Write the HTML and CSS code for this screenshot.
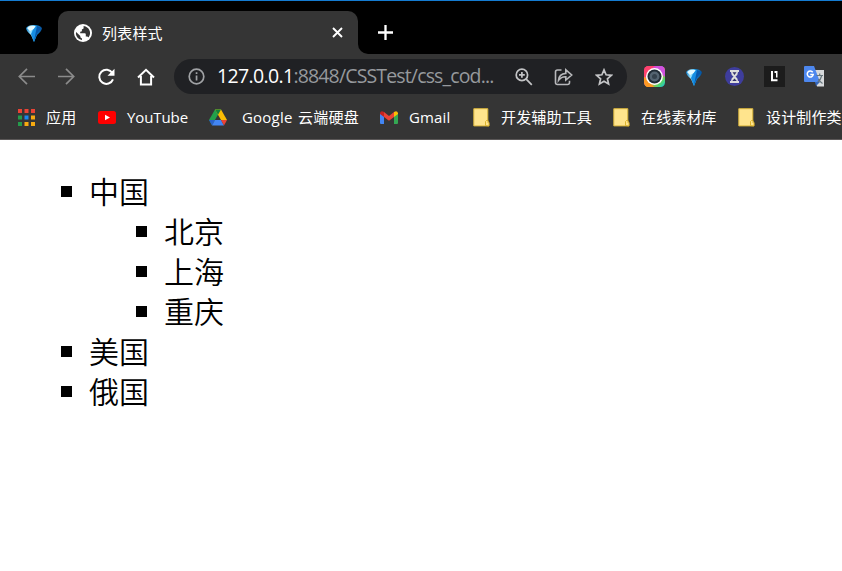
FILE: index.html
```html
<!DOCTYPE html>
<html lang="zh-CN">
<head>
<meta charset="utf-8">
<title>列表样式</title>
<link rel="stylesheet" href="styles.css">
</head>
<body>
<svg class="defs" width="0" height="0" aria-hidden="true">
  <defs>
    <linearGradient id="gem" x1="0" x2="1"><stop offset="0" stop-color="#0879c8"/><stop offset=".3" stop-color="#a9eaff"/><stop offset=".55" stop-color="#159ae9"/><stop offset="1" stop-color="#064a91"/></linearGradient>
    <linearGradient id="rainbow" x1="0" y1="0" x2="1" y2="1"><stop offset="0" stop-color="#ff4264"/><stop offset=".22" stop-color="#fb39b4"/><stop offset=".45" stop-color="#b35bf5"/><stop offset=".55" stop-color="#ff9d25"/><stop offset=".8" stop-color="#52d86a"/><stop offset="1" stop-color="#16bde8"/></linearGradient>
    <symbol id="diamond" viewBox="0 0 18 18"><path d="M1 4Q3 1 9 1t8 3q0 3-5 7l-3 7-3-7Q1 7 1 4Z" fill="url(#gem)"/><path d="M2 4Q5 1 11 2L9 5 5 7Z" fill="#e5faff"/><path d="M8 6l3-4 2 5-4 11-3-8Z" fill="#168ee3"/><path d="M12 2l4 2-4 6-3 7 2-10Z" fill="#0757ab"/></symbol>
    <symbol id="note" viewBox="0 0 17 19"><path d="M.8.7h14v12.5l1 1v3.7H.8Z" fill="#ffe48d" stroke="#d9b53c"/><path d="M12.500 17.500v-4l1-1h1.500v2l1 1v2.500Z" fill="#ffe48d" stroke="#d9ae24" stroke-width=".9"/></symbol>
  </defs>
</svg>
<header class="browser">
  <div class="tabs">
    <div class="pinned"><svg width="18" height="18"><use href="#diamond"/></svg></div>
    <div class="tab">
      <svg width="18" height="18" viewBox="0 0 18 18"><circle cx="9" cy="9" r="9" fill="#fff"/><path d="M9.600 2.100v1.800q0 1.400-1.700 1.400v1.600q0 .8-1.700.8v1.500h4.600q1 0 1 1.200v2.100h1q1.300 0 1.700 1Q16.200 11.300 16.100 9q0-1.600-.8-3Q13.900 3 9.600 2.100ZM2.100 8.100l4.200 3.800v.9q0 1.400 1.700 1.600v1.600Q2.600 15 1.900 10Z" fill="#353535"/></svg>
      <span class="tab-title">列表样式</span>
      <svg width="11" height="11" viewBox="0 0 11 11" fill="none" stroke="#fff" stroke-width="1.900"><path d="M1 1l9 9M10 1l-9 9"/></svg>
    </div>
    <div class="strip"><svg width="15" height="15" viewBox="0 0 15 15" fill="none" stroke="#fff" stroke-width="2.300"><path d="M7.500 0v15M0 7.500h15"/></svg></div>
  </div>
  <nav class="toolbar">
    <svg width="17" height="17" viewBox="0 0 17 17" fill="none" stroke="#8b8b8b" stroke-width="1.700"><path d="M17 8.500H1.500M9 .8L1.300 8.500 9 16.200"/></svg>
    <svg class="forward" width="17" height="17" viewBox="0 0 17 17" fill="none" stroke="#8b8b8b" stroke-width="1.700"><path d="M0 8.500h15.500M8 .8l7.700 7.700L8 16.200"/></svg>
    <svg class="reload" width="19" height="18" viewBox="0 0 19 18"><path d="M15.400 5A7.100 7.100 0 1 0 16 11.300" fill="none" stroke="#fff" stroke-width="2"/><path d="M17.500.8v7h-7Z" fill="#fff"/></svg>
    <svg class="home" width="18" height="18" viewBox="0 0 18 18" fill="none" stroke="#fff" stroke-width="2"><path d="M1 9.400l8-7.600 8 7.600M3.900 8v8.500h10.200V8"/></svg>
    <div class="address">
      <svg width="17" height="17" viewBox="0 0 17 17"><circle cx="8.500" cy="8.500" r="7.300" fill="none" stroke="#a0a2a5" stroke-width="1.700"/><path d="M7.700 7.500h1.700v5H7.700zM7.700 4.300h1.700V6H7.700z" fill="#a0a2a5"/></svg>
      <span class="url"><b>127.0.0.1</b>:8848/CSSTest/css_cod...</span>
      <svg width="18" height="18" viewBox="0 0 18 18" fill="none" stroke="#c3c4c6" stroke-width="1.700"><circle cx="6.900" cy="6.900" r="5.700"/><path d="M11.200 11.200l5.600 5.600M6.900 4v5.800M4 6.900h5.800"/></svg>
      <svg class="share" width="19" height="18" viewBox="0 0 19 18" fill="none" stroke="#b7b8bb" stroke-width="1.600"><path d="M7.500 2H3.500Q1.500 2 1.500 4v10.500q0 2 2 2h10q2 0 2-2v-1.800M4.500 12.400q.5-6.600 7.300-7V1.800L17.700 7l-5.900 5V8.700q-4.500-.2-7.300 3.700Z"/></svg>
      <svg class="star" width="18" height="18" viewBox="0 0 18 18" fill="none" stroke="#c3c4c6" stroke-width="1.700"><path d="M9 1.900l2.100 4.900 5.300.5-4 3.500 1.200 5.200L9 13.200 4.400 16l1.200-5.200-4-3.500 5.300-.5Z"/></svg>
    </div>
    <div class="extensions">
      <svg width="21" height="21" viewBox="0 0 21 21"><rect width="21" height="21" rx="4.500" fill="url(#rainbow)"/><path d="M0 10v6q0 5 5 5h5L5 15Z" fill="#ff9a22"/><path d="M11 0h5q5 0 5 5v6l-6-5Z" fill="#d052df"/><path d="M0 5q0-5 5-5h5L2 11H0Z" fill="#ff426e"/><circle cx="10.500" cy="10.500" r="8.500" fill="#fff"/><circle cx="10.500" cy="10.500" r="7" fill="#202b36"/><circle cx="10.500" cy="10.500" r="5" fill="#536371"/><circle cx="10.500" cy="10.500" r="2.500" fill="#34414d"/></svg>
      <svg width="18" height="18"><use href="#diamond"/></svg>
      <svg width="19" height="19" viewBox="0 0 19 19"><circle cx="9.500" cy="9.500" r="9.500" fill="#3e3d9c"/><path d="M5 3h9v2h-1q0 3-2.500 4.500Q13 11 13 14h1v2H5v-2h1q0-3 2.500-4.500Q6 8 6 5H5Z" fill="#ddd"/><path d="M7.500 5.300h4L9.500 8ZM7.200 14l2.300-2.500 2.300 2.500Z" fill="#33316c"/></svg>
      <svg width="21" height="21" viewBox="0 0 21 21"><path d="M0 0h21v21H0z" fill="#1c1c1c"/><path d="M7 5h2v8.300h4.500v2H7ZM10.500 5h3v6.500h-1.500V7h-1.500Z" fill="#fff"/></svg>
      <svg width="21" height="21" viewBox="0 0 21 21"><path d="M8 4h12v16.500h-7Z" fill="#d7d9db"/><path d="M0 1q0-1 1-1h9l6 16H1q-1 0-1-1Z" fill="#4d87ee"/><path d="M11 16h5l-4 4Z" fill="#3466ba"/><path d="M12.500 9.500H19M15.700 7.500v2M17.800 9.500q-1 4-4 6.500M14.500 13q1.500 3 4 4.500" fill="none" stroke="#65747b" stroke-width="1.200"/><path d="M8.700 6.300A3 3 0 1 0 9.200 8.600H6.300" fill="none" stroke="#fff" stroke-width="1.500"/></svg>
    </div>
  </nav>
  <nav class="bookmarks">
    <a class="apps"><svg width="17" height="17" viewBox="0 0 17 17"><path d="M0 0h4v4H0zM6.500 0h4v4h-4zM13 0h4v4h-4z" fill="#e94335"/><path d="M0 6.500h4v4H0zM0 13h4v4H0z" fill="#249b4b"/><path d="M6.500 6.500h4v4h-4z" fill="#1987ed"/><path d="M13 6.500h4v4h-4zM13 13h4v4h-4zM6.500 13h4v4h-4z" fill="#f7aa10"/></svg><span>应用</span></a>
    <a class="youtube"><svg width="18" height="13" viewBox="0 0 18 13"><rect width="18" height="13" rx="2.500" fill="#f00"/><path d="M7 3.700v5.600l5-2.800Z" fill="#fff"/></svg><span>YouTube</span></a>
    <a class="drive"><svg width="18" height="17" viewBox="0 0 18 17"><path d="M6 .5h6L3 16 0 11Z" fill="#22a04b"/><path d="M6 .5h6l6 10.500h-6Z" fill="#fbbc04"/><path d="M6 .5h6L9 5.700Z" fill="#11823a"/><path d="M0 11h6l-3 5.500Z" fill="#2861cd"/><path d="M6 11h6l3 5.500H3Z" fill="#4285f4"/><path d="M12 11h6l-3 5.500Z" fill="#ea4335"/></svg><span>Google 云端硬盘</span></a>
    <a class="gmail"><svg width="18" height="13" viewBox="0 0 18 13"><path d="M0 2l4 3v8H1q-1 0-1-1Z" fill="#4285f4"/><path d="M14 5l4-3v10q0 1-1 1h-3Z" fill="#34a853"/><path d="M4 1l5 4 5-4v5L9 9.800 4 6Z" fill="#ea4335"/><path d="M0 2Q1-1 4 1v5L0 3Z" fill="#c5221f"/><path d="M14 1q3-2 4 1v1l-4 3Z" fill="#fbbc04"/></svg><span>Gmail</span></a>
    <a class="dev"><svg width="17" height="19"><use href="#note"/></svg><span>开发辅助工具</span></a>
    <a class="assets"><svg width="17" height="19"><use href="#note"/></svg><span>在线素材库</span></a>
    <a class="design"><svg width="17" height="19"><use href="#note"/></svg><span>设计制作类</span></a>
  </nav>
</header>
<main>
  <ul>
    <li>中国
      <ul><li>北京</li><li>上海</li><li>重庆</li></ul>
    </li>
    <li>美国</li>
    <li>俄国</li>
  </ul>
</main>
</body>
</html>
```
FILE: styles.css
```css
* { box-sizing: border-box; }
body { margin: 0; height: 571px; overflow: hidden; background: #fff; color: #000; font-family: "Open Sans", "Noto Sans CJK SC", sans-serif; }
svg { display: block; flex: none; }
.defs { position: absolute; }
.browser { height: 140px; background: #353535; border-bottom: 1px solid #5b5858; color: #fff; overflow: hidden; }

.tabs { height: 54px; display: flex; border-top: 1px solid #147bd1; background: linear-gradient(#000 30px, #353535 30px); }
.pinned { width: 58px; padding: 23px 0 0 25px; background: #000; border-bottom-right-radius: 10px; }
.tab { width: 300px; height: 43px; margin-top: 10px; display: flex; align-items: center; padding-left: 16px; background: #353535; border-radius: 10px 10px 0 0; }
.tab-title { margin-left: 10px; width: 230px; font: 15px/22px "Noto Sans CJK SC", sans-serif; letter-spacing: .2px; }
.strip { flex: 1; padding: 24px 0 0 20px; background: #000; border-bottom-left-radius: 10px; }

.toolbar { height: 45px; display: flex; align-items: center; padding-left: 18px; }
.forward { margin-left: 23px; }
.reload { margin-left: 22px; }
.home { margin-left: 21px; }
.address { width: 453px; height: 35px; margin-left: 19px; padding-left: 14px; display: flex; flex: none; align-items: center; border-radius: 18px; background: #202124; }
.url { flex: none; width: 278px; height: 31px; margin: 0 20px 0 12px; color: #96999d; font-size: 19.500px; line-height: 29px; letter-spacing: -.85px; white-space: nowrap; }
.url b { font-weight: 400; color: #fff; letter-spacing: -.65px; }
.share { margin-left: 21px; }
.star { margin-left: 22px; }
.extensions { flex: none; margin-left: 7px; display: grid; grid-template-columns: repeat(5, 40px); place-items: center; }

.bookmarks { height: 40px; display: flex; padding-left: 18px; align-items: center; font-size: 15px; line-height: 22px; letter-spacing: .15px; }
.bookmarks a { display: flex; flex: none; align-items: center; padding-bottom: 3px; white-space: nowrap; }
.bookmarks span { padding-bottom: 2px; }
.apps { width: 80px; gap: 11px; }
.youtube { width: 111px; gap: 11px; letter-spacing: -.1px; }
.drive { width: 171px; gap: 15px; }
.drive span { letter-spacing: .2px; word-spacing: 1.500px; }
.gmail { width: 93px; gap: 11px; }
.dev { width: 140px; gap: 11px; }
.assets { width: 125px; gap: 11px; }
.design { gap: 11px; }

main { padding: 30px 0 0 10px; font: 350 30px/40px "Noto Sans CJK SC DemiLight", "Noto Sans CJK SC", sans-serif; }
ul { list-style: none; margin: 0; padding: 0 0 0 79px; }
li ul { padding-left: 75px; }
li::before { content: ""; float: left; width: 11px; height: 11px; margin: 16px 0 0 -28px; background: #000; }
```
